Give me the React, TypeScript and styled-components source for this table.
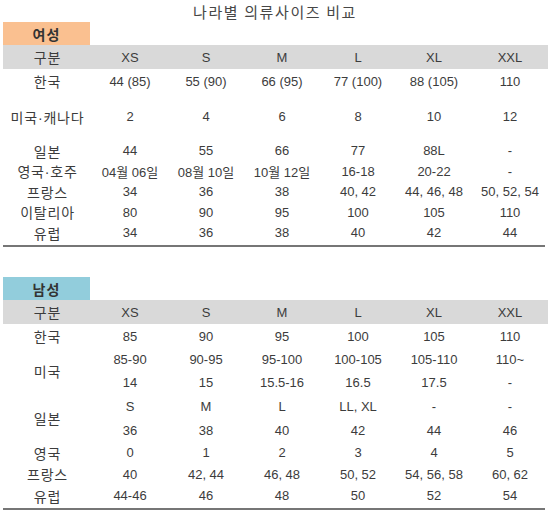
import React from "react";
import styled, { createGlobalStyle } from "styled-components";

const GlobalStyle = createGlobalStyle`
  html, body {
    margin: 0;
    padding: 0;
    background: #ffffff;
  }
  body {
    font-family: "Liberation Sans", "Noto Sans CJK KR", sans-serif;
    color: #3c3c3c;
  }
`;

interface Line {
  cells: string[];
  h: number;
}

interface Group {
  label: string;
  lines: Line[];
}

interface SectionData {
  title: string;
  color: string;
  groups: Group[];
}

const sizes = ["XS", "S", "M", "L", "XL", "XXL"];

const women: SectionData = {
  title: "여성",
  color: "#fac090",
  groups: [
    { label: "한국", lines: [{ cells: ["44 (85)", "55 (90)", "66 (95)", "77 (100)", "88 (105)", "110"], h: 24 }] },
    { label: "미국·캐나다", lines: [{ cells: ["2", "4", "6", "8", "10", "12"], h: 47 }] },
    { label: "일본", lines: [{ cells: ["44", "55", "66", "77", "88L", "-"], h: 21 }] },
    { label: "영국·호주", lines: [{ cells: ["04월 06일", "08월 10일", "10월 12일", "16-18", "20-22", "-"], h: 20 }] },
    { label: "프랑스", lines: [{ cells: ["34", "36", "38", "40, 42", "44, 46, 48", "50, 52, 54"], h: 21 }] },
    { label: "이탈리아", lines: [{ cells: ["80", "90", "95", "100", "105", "110"], h: 20 }] },
    { label: "유럽", lines: [{ cells: ["34", "36", "38", "40", "42", "44"], h: 21 }] },
  ],
};

const men: SectionData = {
  title: "남성",
  color: "#92cddc",
  groups: [
    { label: "한국", lines: [{ cells: ["85", "90", "95", "100", "105", "110"], h: 24 }] },
    {
      label: "미국",
      lines: [
        { cells: ["85-90", "90-95", "95-100", "100-105", "105-110", "110~"], h: 23 },
        { cells: ["14", "15", "15.5-16", "16.5", "17.5", "-"], h: 23 },
      ],
    },
    {
      label: "일본",
      lines: [
        { cells: ["S", "M", "L", "LL, XL", "-", "-"], h: 25 },
        { cells: ["36", "38", "40", "42", "44", "46"], h: 23 },
      ],
    },
    { label: "영국", lines: [{ cells: ["0", "1", "2", "3", "4", "5"], h: 21 }] },
    { label: "프랑스", lines: [{ cells: ["40", "42, 44", "46, 48", "50, 52", "54, 56, 58", "60, 62"], h: 22 }] },
    { label: "유럽", lines: [{ cells: ["44-46", "46", "48", "50", "52", "54"], h: 21 }] },
  ],
};

const Page = styled.div`
  width: 550px;
  padding: 0 0 0 3px;
  box-sizing: border-box;
`;

const Title = styled.div`
  height: 22px;
  display: flex;
  align-items: center;
  justify-content: center;
  padding-right: 3px;
  font-family: "Noto Sans CJK KR", sans-serif;
  font-size: 15px;
  letter-spacing: 1.6px;
  color: #474747;
`;

const Section = styled.section<{ $gap: number }>`
  margin-top: ${(p) => p.$gap}px;
  width: 545px;
`;

const Badge = styled.div<{ $color: string }>`
  width: 87px;
  height: 23px;
  background: ${(p) => p.$color};
  display: flex;
  align-items: center;
  justify-content: center;
  font-family: "Noto Sans CJK KR", sans-serif;
  font-weight: 700;
  font-size: 14px;
  letter-spacing: 1px;
  color: #333;
`;

const Row = styled.div<{ $h: number; $head?: boolean }>`
  display: grid;
  grid-template-columns: 89px repeat(6, 76px);
  height: ${(p) => p.$h}px;
  background: ${(p) => (p.$head ? "#d9d9d9" : "transparent")};
`;

const GroupRow = styled.div`
  display: flex;
`;

const LabelCell = styled.div`
  width: 89px;
  flex: none;
  display: flex;
  align-items: center;
  justify-content: center;
  font-size: 14px;
  letter-spacing: 0.8px;
  white-space: nowrap;
`;

const Lines = styled.div`
  display: flex;
  flex-direction: column;
`;

const ValueRow = styled.div<{ $h: number }>`
  display: grid;
  grid-template-columns: repeat(6, 76px);
  height: ${(p) => p.$h}px;
`;

const Cell = styled.div<{ $label?: boolean }>`
  display: flex;
  align-items: center;
  justify-content: center;
  font-size: ${(p) => (p.$label ? 14 : 13)}px;
  letter-spacing: ${(p) => (p.$label ? 0.8 : 0)}px;
  white-space: nowrap;
`;

const Rule = styled.div`
  margin-top: 2px;
  width: 542px;
  height: 2px;
  background: #767676;
`;

const SizeTable: React.FC<{ data: SectionData; gap: number }> = ({ data, gap }) => (
  <Section $gap={gap}>
    <Badge $color={data.color}>{data.title}</Badge>
    <Row $h={24} $head>
      <Cell $label>구분</Cell>
      {sizes.map((s) => (
        <Cell key={s}>{s}</Cell>
      ))}
    </Row>
    {data.groups.map((g) => (
      <GroupRow key={g.label}>
        <LabelCell>{g.label}</LabelCell>
        <Lines>
          {g.lines.map((line, i) => (
            <ValueRow key={i} $h={line.h}>
              {line.cells.map((c, j) => (
                <Cell key={j}>{c}</Cell>
              ))}
            </ValueRow>
          ))}
        </Lines>
      </GroupRow>
    ))}
    <Rule />
  </Section>
);

export default function App() {
  return (
    <>
      <GlobalStyle />
      <Page>
        <Title>나라별 의류사이즈 비교</Title>
        <SizeTable data={women} gap={0} />
        <SizeTable data={men} gap={30} />
      </Page>
    </>
  );
}
